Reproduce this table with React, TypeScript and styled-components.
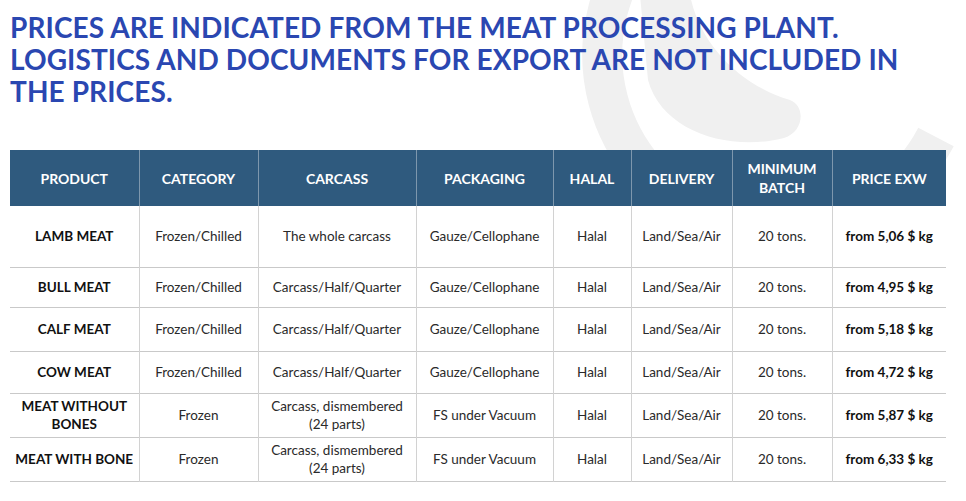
import React from 'react';
import styled, { createGlobalStyle } from 'styled-components';

const GlobalStyle = createGlobalStyle`
  html, body {
    margin: 0;
    padding: 0;
    background: #ffffff;
  }
`;

const Page = styled.div`
  position: relative;
  width: 966px;
  height: 501px;
  overflow: hidden;
  background: #ffffff;
  font-family: Lato, 'Open Sans', sans-serif;
`;

const Backdrop = styled.svg`
  position: absolute;
  left: 0;
  top: 0;
  pointer-events: none;
`;

const Content = styled.div`
  position: relative;
  display: flex;
  flex-direction: column;
  padding: 11px 10px 0;
`;

const Title = styled.h1`
  margin: 0;
  max-width: 910px;
  font-family: Lato, sans-serif;
  font-weight: 700;
  font-size: 28px;
  letter-spacing: 0.1px;
  line-height: 32px;
  color: #2a47b1;
  text-transform: uppercase;
`;

const Table = styled.table`
  margin-top: 43px;
  width: 936px;
  border-collapse: collapse;
  table-layout: fixed;
`;

const HeadRow = styled.tr`
  height: 56px;
  background: #2f5a7e;
`;

const HeadCell = styled.th`
  padding: 0 6px;
  border-left: 1px solid #7d97ad;
  color: #ffffff;
  font-size: 14px;
  font-weight: 700;
  line-height: 19px;
  text-align: center;
  &:first-child {
    border-left: none;
  }
`;

const Row = styled.tr<{ $h: number }>`
  height: ${({ $h }) => $h}px;
  background: #ffffff;
  border-bottom: 1px solid #c9c9c9;
`;

const Cell = styled.td<{ $bold?: boolean }>`
  padding: 0 4px;
  border-left: 1px solid #d2d2d2;
  color: ${({ $bold }) => ($bold ? '#111111' : '#2a2a2a')};
  font-size: 13.5px;
  font-weight: ${({ $bold }) => ($bold ? 700 : 400)};
  line-height: 18px;
  text-align: center;
  &:first-child {
    border-left: none;
  }
`;

const columns = [
  { label: 'PRODUCT', width: 129 },
  { label: 'CATEGORY', width: 119 },
  { label: 'CARCASS', width: 158 },
  { label: 'PACKAGING', width: 137 },
  { label: 'HALAL', width: 78 },
  { label: 'DELIVERY', width: 101 },
  { label: 'MINIMUM BATCH', width: 100 },
  { label: 'PRICE EXW', width: 114 },
];

const rows = [
  { h: 61, product: 'LAMB MEAT', category: 'Frozen/Chilled', carcass: 'The whole carcass', packaging: 'Gauze/Cellophane', price: 'from 5,06 $ kg' },
  { h: 40, product: 'BULL MEAT', category: 'Frozen/Chilled', carcass: 'Carcass/Half/Quarter', packaging: 'Gauze/Cellophane', price: 'from 4,95 $ kg' },
  { h: 44, product: 'CALF MEAT', category: 'Frozen/Chilled', carcass: 'Carcass/Half/Quarter', packaging: 'Gauze/Cellophane', price: 'from 5,18 $ kg' },
  { h: 42, product: 'COW MEAT', category: 'Frozen/Chilled', carcass: 'Carcass/Half/Quarter', packaging: 'Gauze/Cellophane', price: 'from 4,72 $ kg' },
  { h: 44, product: 'MEAT WITHOUT BONES', category: 'Frozen', carcass: 'Carcass, dismembered (24 parts)', packaging: 'FS under Vacuum', price: 'from 5,87 $ kg' },
  { h: 44, product: 'MEAT WITH BONE', category: 'Frozen', carcass: 'Carcass, dismembered (24 parts)', packaging: 'FS under Vacuum', price: 'from 6,33 $ kg' },
];

// faint logo arcs behind the heading
function Decoration() {
  return (
    <Backdrop width="966" height="501" viewBox="0 0 966 501">
      <path d="M 936 137 A 177 177 0 1 1 720 -112" fill="none" stroke="#f0f0f0" strokeWidth="40" />
      <path
        d="M 640 -5 L 690 -5 C 700 45 740 85 790 100 C 806 106 804 132 784 138 C 730 152 662 132 648 80 Z"
        fill="#f0f0f0"
      />
    </Backdrop>
  );
}

export default function App() {
  return (
    <Page>
      <GlobalStyle />
      <Decoration />
      <Content>
        <Title>
          Prices are indicated from the meat processing plant.
          <br />
          Logistics and documents for export are not included in the prices.
        </Title>
        <Table>
          <colgroup>
            {columns.map((c) => (
              <col key={c.label} style={{ width: c.width }} />
            ))}
          </colgroup>
          <thead>
            <HeadRow>
              {columns.map((c) => (
                <HeadCell key={c.label}>{c.label}</HeadCell>
              ))}
            </HeadRow>
          </thead>
          <tbody>
            {rows.map((r) => (
              <Row key={r.product} $h={r.h}>
                <Cell $bold>{r.product}</Cell>
                <Cell>{r.category}</Cell>
                <Cell>{r.carcass}</Cell>
                <Cell>{r.packaging}</Cell>
                <Cell>Halal</Cell>
                <Cell>Land/Sea/Air</Cell>
                <Cell>20 tons.</Cell>
                <Cell $bold>{r.price}</Cell>
              </Row>
            ))}
          </tbody>
        </Table>
      </Content>
    </Page>
  );
}
